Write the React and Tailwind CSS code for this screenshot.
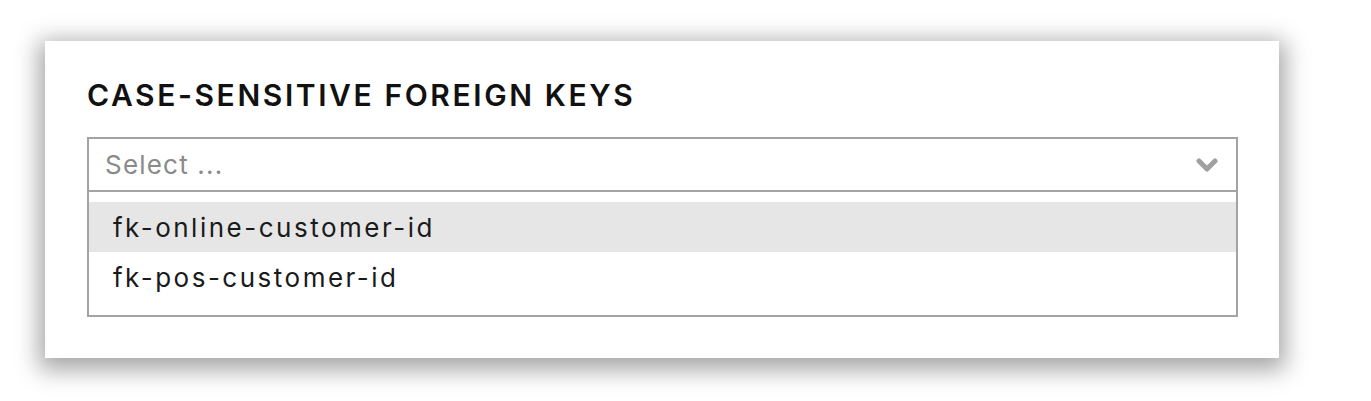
import React from 'react';

const options = ['fk-online-customer-id', 'fk-pos-customer-id'];

const Chevron = () => (
    <svg width="22" height="16" viewBox="0 0 22 16" className="text-[#a0a0a0]">
        <polyline points="3,4 11,12 19,4" fill="none" stroke="currentColor" strokeWidth="5" strokeLinecap="round" strokeLinejoin="round" />
    </svg>
);

const App = () => {
    return (
        <div className="w-[1371px] h-[401px] bg-white pt-[41px] pl-[45px]" style={{ fontFamily: 'Inter, "Open Sans", sans-serif' }}>
            <div className="w-[1234px] h-[317px] bg-white px-[42px] pt-[34px] shadow-[0_6px_22px_6px_rgba(0,0,0,0.35)]">
                <h2 className="text-[30px] leading-[40px] font-semibold text-[#111] tracking-[2.6px]">
                    CASE-SENSITIVE FOREIGN KEYS
                </h2>
                <div className="mt-[22px] w-[1151px]">
                    <div className="h-[55px] border-2 border-[#a3a3a3] flex items-center justify-between pl-[16px] pr-[18px]">
                        <span className="text-[26px] text-[#8a8a8a] tracking-[1.2px]">Select ...</span>
                        <Chevron />
                    </div>
                    <div className="border-2 border-t-0 border-[#a3a3a3] pt-[10px] pb-[13px]">
                        {options.map((o, i) => (
                            <div
                                key={o}
                                className={`h-[50px] flex items-center pl-[24px] text-[26px] text-[#1a1a1a] tracking-[2.5px] ${i === 0 ? 'bg-[#e6e6e6]' : ''}`}
                            >
                                {o}
                            </div>
                        ))}
                    </div>
                </div>
            </div>
        </div>
    );
};

export default App;
